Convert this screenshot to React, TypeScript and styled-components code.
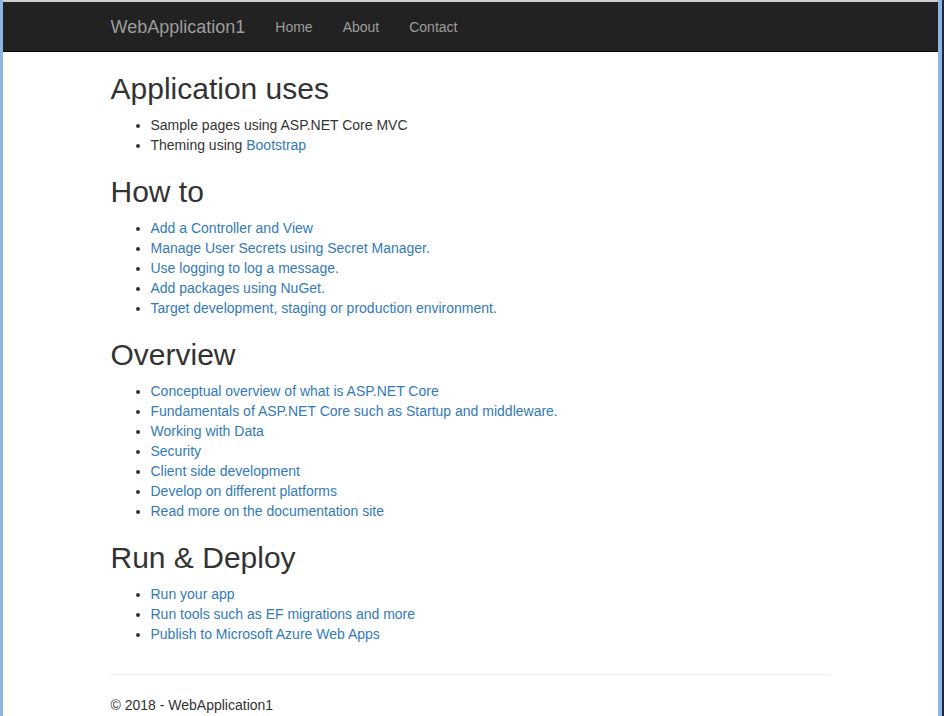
import React from "react";
import styled, { createGlobalStyle } from "styled-components";

const GlobalStyle = createGlobalStyle`
  html, body { margin: 0; padding: 0; }
  body {
    font-family: "Liberation Sans", Arial, Helvetica, sans-serif;
    font-size: 14px;
    line-height: 1.42857143;
    color: #333;
    background: #8cb5e1;
  }
  * { box-sizing: border-box; }
`;

const Frame = styled.div`
  display: flex;
  height: 716px;
  background: #8cb5e1;
  padding-left: 3px;
  overflow: hidden;
`;

const Viewport = styled.div`
  width: 935px;
  height: 100%;
  background: #fff;
  border-top: 2px solid #cdcdcd;
  overflow: hidden;
`;

const RightEdge = styled.div`
  flex: 1;
  border-right: 2px solid #1d2836;
`;

const Navbar = styled.nav`
  height: 50px;
  background: #222;
  border-bottom: 1px solid #080808;
`;

const Container = styled.div`
  width: 750px;
  margin: 0 auto;
  padding: 0 15px;
`;

const NavInner = styled(Container)`
  display: flex;
  align-items: center;
  height: 100%;
`;

const Brand = styled.a`
  font-size: 18px;
  line-height: 20px;
  color: #9d9d9d;
  text-decoration: none;
  padding: 15px 15px 14px 0;
`;

const NavLink = styled.a`
  font-size: 14px;
  line-height: 20px;
  color: #9d9d9d;
  text-decoration: none;
  padding: 15px 15px 14px;
`;

const Content = styled(Container)``;

const Row = styled.div`
  display: flow-root;
`;

const Heading = styled.h2`
  font-size: 30px;
  font-weight: 500;
  line-height: 1.1;
  margin: 20px 0 10px;
  color: #333;
`;

const List = styled.ul`
  margin: 0 0 10px;
  padding-left: 40px;
`;

const Item = styled.li`
  line-height: 20px;
`;

const Link = styled.a`
  color: #337ab7;
  text-decoration: none;
`;

const Rule = styled.hr`
  margin: 20px 0;
  border: 0;
  border-top: 1px solid #eee;
  height: 0;
`;

const FooterText = styled.p`
  margin: 0 0 10px;
  line-height: 20px;
`;

type Section = { title: string; items: React.ReactNode[] };

const sections: Section[] = [
  {
    title: "Application uses",
    items: [
      "Sample pages using ASP.NET Core MVC",
      <>Theming using <Link href="#">Bootstrap</Link></>,
    ],
  },
  {
    title: "How to",
    items: [
      <Link href="#">Add a Controller and View</Link>,
      <Link href="#">Manage User Secrets using Secret Manager.</Link>,
      <Link href="#">Use logging to log a message.</Link>,
      <Link href="#">Add packages using NuGet.</Link>,
      <Link href="#">Target development, staging or production environment.</Link>,
    ],
  },
  {
    title: "Overview",
    items: [
      <Link href="#">Conceptual overview of what is ASP.NET Core</Link>,
      <Link href="#">Fundamentals of ASP.NET Core such as Startup and middleware.</Link>,
      <Link href="#">Working with Data</Link>,
      <Link href="#">Security</Link>,
      <Link href="#">Client side development</Link>,
      <Link href="#">Develop on different platforms</Link>,
      <Link href="#">Read more on the documentation site</Link>,
    ],
  },
  {
    title: "Run & Deploy",
    items: [
      <Link href="#">Run your app</Link>,
      <Link href="#">Run tools such as EF migrations and more</Link>,
      <Link href="#">Publish to Microsoft Azure Web Apps</Link>,
    ],
  },
];

export default function App() {
  return (
    <>
      <GlobalStyle />
      <Frame>
        <Viewport>
          <Navbar>
            <NavInner>
              <Brand href="#">WebApplication1</Brand>
              <NavLink href="#">Home</NavLink>
              <NavLink href="#">About</NavLink>
              <NavLink href="#">Contact</NavLink>
            </NavInner>
          </Navbar>
          <Content>
            <Row>
              {sections.map((s) => (
                <section key={s.title}>
                  <Heading>{s.title}</Heading>
                  <List>
                    {s.items.map((it, i) => (
                      <Item key={i}>{it}</Item>
                    ))}
                  </List>
                </section>
              ))}
            </Row>
            <Rule />
            <footer>
              <FooterText>© 2018 - WebApplication1</FooterText>
            </footer>
          </Content>
        </Viewport>
        <RightEdge />
      </Frame>
    </>
  );
}
